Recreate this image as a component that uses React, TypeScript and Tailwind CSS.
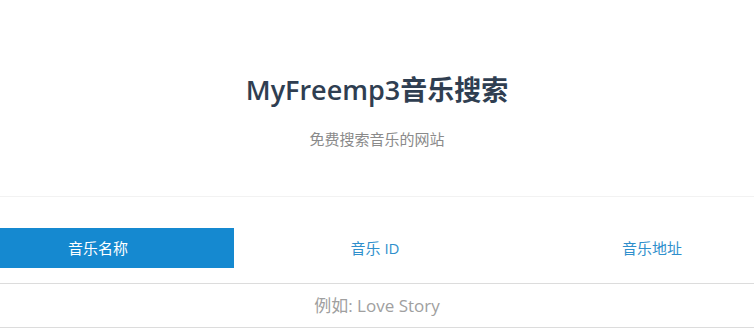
import React from "react";

export default function App() {
  const tabs = ["音乐名称", "音乐 ID", "音乐地址"];
  return (
    <div className="w-full min-h-[328px] bg-white overflow-hidden font-['Open_Sans','Noto_Sans_CJK_SC',sans-serif]">
      <header className="border-b border-[#f2f2f2] pt-[70px] pb-[46px] flex flex-col items-center">
        <h1 className="text-[27px] leading-[40px] text-[#2f3e51]">
          <span className="font-semibold">MyFreemp3</span>
          <span className="font-bold">音乐搜索</span>
        </h1>
        <p className="mt-[18px] text-[15px] leading-[22px] text-[#8a8a8a]">免费搜索音乐的网站</p>
      </header>
      <div className="flex justify-center mt-[31px]">
        <div className="flex w-[831px] shrink-0 mr-[4px]">
          {tabs.map((t, i) => (
            <div key={t} className="w-[277px] px-[3px]">
              <div
                className={
                  i === 0
                    ? "h-[40px] flex items-center justify-center bg-[#1589d0] text-white text-[15px]"
                    : "h-[40px] flex items-center justify-center text-[#2f8fcc] text-[15px]"
                }
              >
                {t}
              </div>
            </div>
          ))}
        </div>
      </div>
      <div className="mt-[15px] border-y border-[#dcdcdc]">
        <input
          className="block w-full h-[43px] text-center text-[17px] text-[#555] placeholder:text-[#a0a0a0] outline-none"
          placeholder="例如: Love Story"
        />
      </div>
    </div>
  );
}
